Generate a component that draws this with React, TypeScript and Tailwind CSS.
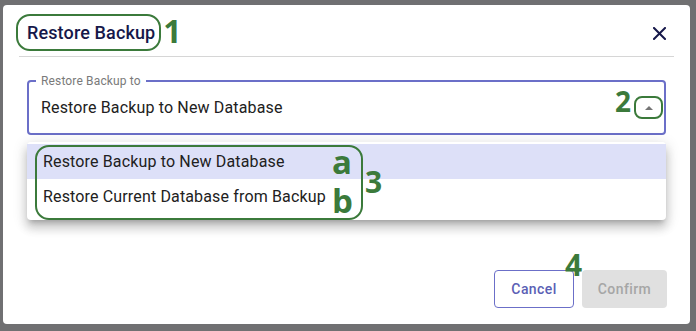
import React from 'react';

const annot = 'font-bold leading-none text-[#3b7a3b]';
const annotFont = { fontFamily: '"Open Sans", sans-serif' };

export default function App() {
  return (
    <div
      className="relative h-[331px] w-[696px] overflow-hidden bg-[#707072] pb-[7px] pl-[3px] pr-[6px] pt-[5px]"
      style={{ fontFamily: 'Roboto, "Noto Sans", sans-serif' }}
    >
      <div className="flex h-full flex-col rounded-[4px] bg-white">
        {/* header */}
        <div className="flex h-[51px] items-center justify-between pl-[13px] pr-[21px]">
          <div className="mt-[4px] flex items-center">
            <div className="flex h-[37px] items-center rounded-[14px] border-2 border-[#3b7a3b] pl-[9px] pr-[4px]">
              <h2 className="text-[18px] font-medium tracking-[0.13px] text-[#16184a]">Restore Backup</h2>
            </div>
            <span className={`${annot} mb-[4px] ml-[2px] text-[32px]`} style={annotFont}>1</span>
          </div>
          <button className="mt-[6px] flex h-[20px] w-[20px] items-center justify-center">
            <svg width="13" height="13" viewBox="0 0 13 13">
              <path d="M1 1 L12 12 M12 1 L1 12" stroke="#16184a" strokeWidth="2" strokeLinecap="square" />
            </svg>
          </button>
        </div>
        <div className="mx-[16px] h-px bg-[#d6d6d6]" />

        {/* body */}
        <div className="px-6 pt-[23px]">
          <div className="relative flex h-[55px] items-center rounded-[4px] border-2 border-[#6b6fc8] pl-[12px]">
            <span className="absolute -top-[7px] left-[7px] bg-white px-[5px] text-[12px] leading-[12px] tracking-[0.15px] text-[#7a7a7a]">
              Restore Backup to
            </span>
            <span className="text-[16px] tracking-[0.15px] text-[#212121]">Restore Backup to New Database</span>
            <div className="ml-auto mr-[1px] flex items-center gap-[3px]">
              <span className={`${annot} mb-[14px] text-[28px]`} style={annotFont}>2</span>
              <div className="flex h-[23px] w-[29px] items-center justify-center rounded-[8px] border-2 border-[#3b7a3b]">
                <svg width="8" height="4" viewBox="0 0 8 4">
                  <path d="M0 4 L4 0 L8 4 Z" fill="#757575" />
                </svg>
              </div>
            </div>

            {/* open menu */}
            <div className="absolute -left-[2px] -right-[2px] top-[60px] z-10 rounded-[4px] bg-white pb-[6px] pt-[2px] shadow-[0_5px_5px_-3px_rgba(0,0,0,0.2),0_8px_10px_1px_rgba(0,0,0,0.14),0_3px_14px_2px_rgba(0,0,0,0.12)]">
              <div className="flex h-[35px] items-center bg-[#dde0f8] pl-[16px] text-[16px] tracking-[0.15px] text-[#212121]">
                Restore Backup to New Database
              </div>
              <div className="flex h-[35px] items-center pl-[16px] text-[16px] tracking-[0.15px] text-[#212121]">
                Restore Current Database from Backup
              </div>
            </div>
          </div>
        </div>

        {/* footer */}
        <div className="mt-auto flex justify-end gap-[8px] pb-[16px] pr-[23px]">
          <button className="h-[38px] w-[80px] rounded-[4px] border border-[#6b6fc8] text-[14px] font-medium tracking-[0.4px] text-[#5b5fb5]">
            Cancel
          </button>
          <button className="h-[38px] w-[85px] rounded-[4px] bg-[#e0e0e0] text-[14px] font-medium tracking-[0.4px] text-[#a6a6a6]">
            Confirm
          </button>
        </div>
      </div>

      {/* annotations drawn over the open menu and footer */}
      <div className="absolute left-[35px] top-[145px] z-20 h-[75px] w-[328px] rounded-[14px] border-2 border-[#3b7a3b]" />
      <span className={`absolute ${annot} left-[365px] top-[167px] z-20 text-[30px]`} style={annotFont}>3</span>
      <span className={`absolute ${annot} left-[332px] top-[145px] z-20 h-[33px] text-[33px]`} style={annotFont}>a</span>
      <span className={`absolute ${annot} left-[332px] top-[184px] z-20 h-[30px] text-[33px]`} style={annotFont}>b</span>
      <span className={`absolute ${annot} left-[565px] top-[250px] text-[30px]`} style={annotFont}>4</span>
    </div>
  );
}
